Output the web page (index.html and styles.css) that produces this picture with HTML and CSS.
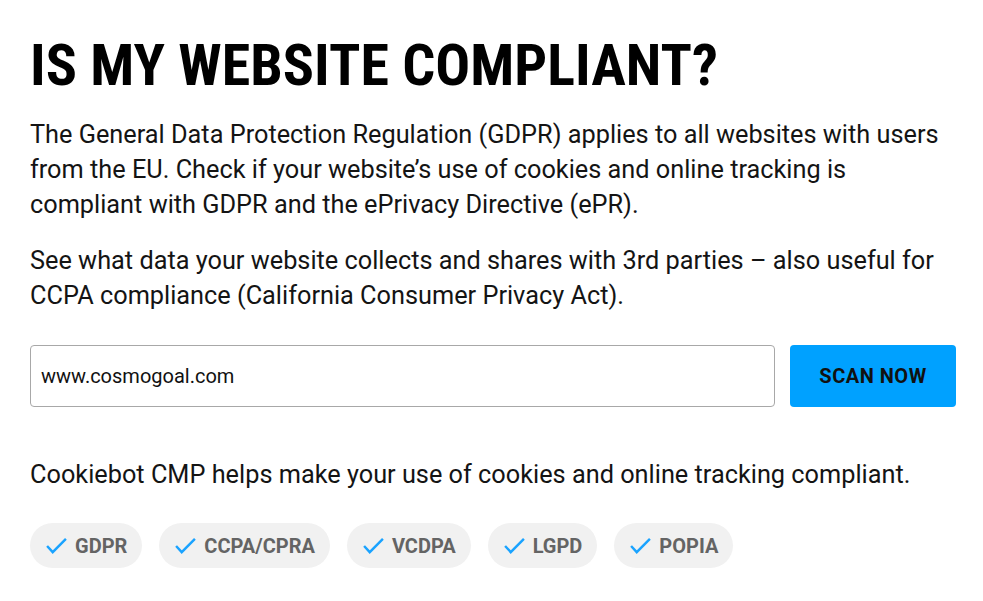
FILE: index.html
```html
<!DOCTYPE html>
<html lang="en">
<head>
  <meta charset="UTF-8" />
  <meta name="viewport" content="width=device-width, initial-scale=1.0"/>
  <title>Is my website compliant?</title>
  <link rel="stylesheet" href="styles.css">
</head>
<body>
  <div class="scanner">
    <h1>IS MY WEBSITE COMPLIANT?</h1>
    <p>The General Data Protection Regulation (GDPR) applies to all websites with users from the EU. Check if your website’s use of cookies and online tracking is compliant with GDPR and the ePrivacy Directive (ePR).</p>
    <p>See what data your website collects and shares with 3rd parties – also useful for CCPA compliance (California Consumer Privacy Act).</p>

    <form class="scan-form" onsubmit="return false">
      <input type="text" class="scan-input" value="www.cosmogoal.com">
      <button type="submit" class="scan-btn">SCAN NOW</button>
    </form>

    <p class="cmp-note">Cookiebot CMP helps make your use of cookies and online tracking compliant.</p>

    <ul class="laws">
      <li class="law"><svg viewBox="0 0 22 17"><path d="M1 8.5l6 6.5L21 1"/></svg>GDPR</li>
      <li class="law"><svg viewBox="0 0 22 17"><path d="M1 8.5l6 6.5L21 1"/></svg>CCPA/CPRA</li>
      <li class="law"><svg viewBox="0 0 22 17"><path d="M1 8.5l6 6.5L21 1"/></svg>VCDPA</li>
      <li class="law"><svg viewBox="0 0 22 17"><path d="M1 8.5l6 6.5L21 1"/></svg>LGPD</li>
      <li class="law"><svg viewBox="0 0 22 17"><path d="M1 8.5l6 6.5L21 1"/></svg>POPIA</li>
    </ul>
  </div>
</body>
</html>
```

FILE: styles.css
```css
body {
  font-family: Roboto, 'Liberation Sans', sans-serif;
  background-color: #ffffff;
  color: #141414;
  margin: 0;
  padding: 0;
}

.scanner {
  padding: 30px 27px 0 30px;
}

h1 {
  font-family: 'Roboto Condensed', 'Liberation Sans Narrow', 'DejaVu Sans Condensed', Roboto, sans-serif;
  font-stretch: condensed;
  font-size: 58px;
  font-weight: bold;
  line-height: 70px;
  margin: 0 0 17px;
  color: #000;
}

p {
  font-size: 25.3px;
  line-height: 35px;
  margin: 0 0 21px;
}

.scan-form {
  display: flex;
  gap: 15px;
  margin: 32px 0 50px;
}

.scan-input {
  flex: 1;
  height: 62px;
  box-sizing: border-box;
  border: 1px solid #a8a8a8;
  border-radius: 4px;
  padding: 0 10px;
  font-family: Roboto, sans-serif;
  font-size: 20px;
  color: #111;
}

.scan-btn {
  width: 166px;
  height: 62px;
  border: none;
  border-radius: 4px;
  background-color: #00a1ff;
  color: #111;
  font-family: Roboto, sans-serif;
  font-size: 20px;
  font-weight: bold;
  letter-spacing: 0.5px;
  cursor: pointer;
}

.cmp-note {
  margin-bottom: 31px;
}

.laws {
  display: flex;
  gap: 17px;
  list-style: none;
  margin: 0;
  padding: 0;
}

.law {
  display: flex;
  align-items: center;
  gap: 8px;
  height: 45px;
  padding: 0 15px 0 16px;
  border-radius: 23px;
  background-color: #f1f1f1;
  color: #646464;
  font-size: 20px;
  font-weight: bold;
}

.law svg {
  width: 21px;
  height: 16px;
  fill: none;
  stroke: #1aa3ff;
  stroke-width: 2.6;
}
```
